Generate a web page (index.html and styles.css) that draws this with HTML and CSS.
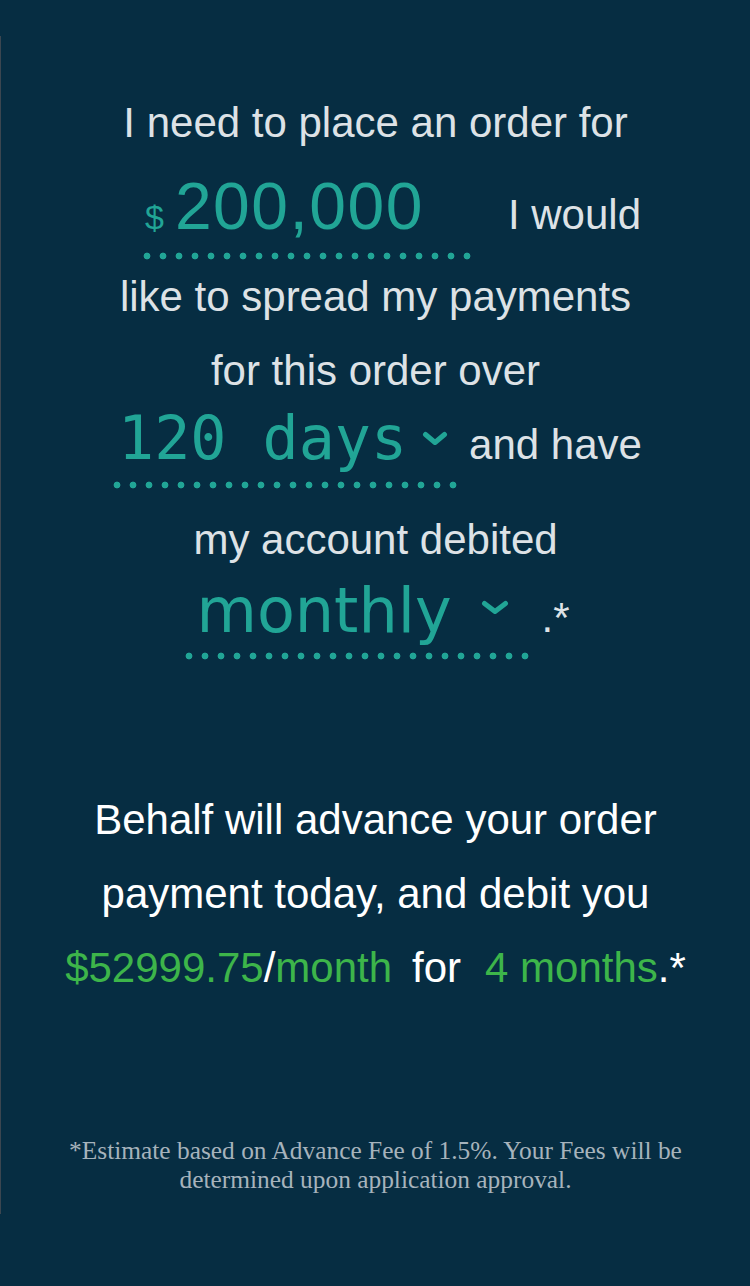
FILE: index.html
```html
<!DOCTYPE html>
<html lang="en">
<head>
<meta charset="utf-8">
<title>Advance calculator</title>
<link rel="stylesheet" href="styles.css">
</head>
<body>
<main class="panel">
  <section class="calc">
    <p class="line">I need to place an order for</p>
    <div class="row row-amount">
      <span class="field field-amount"><span class="cur">$</span><span class="amt">200,000</span></span>
      <span class="line-text">I would</span>
    </div>
    <p class="line">like to spread my payments</p>
    <p class="line">for this order over</p>
    <div class="row row-days">
      <span class="field field-days">120 days<svg class="chev chev-days" width="26" height="15" viewBox="0 0 26 15"><path d="M3.5 3.5 L13 11.5 L22.5 3.5" fill="none" stroke="#21a596" stroke-width="5" stroke-linecap="round" stroke-linejoin="round"/></svg></span>
      <span class="line-text">and have</span>
    </div>
    <p class="line">my account debited</p>
    <div class="row row-freq">
      <span class="field field-freq">monthly<svg class="chev chev-freq" width="28" height="15" viewBox="0 0 28 15"><path d="M3.5 3.5 L14 11.5 L24.5 3.5" fill="none" stroke="#21a596" stroke-width="5" stroke-linecap="round" stroke-linejoin="round"/></svg></span>
      <span class="line-text">.*</span>
    </div>
  </section>
  <section class="result">
    <p class="res-line">Behalf will advance your order<br>payment today, and debit you<br><span class="g">$52999.75</span>/<span class="g">month</span><span class="sep">for</span><span class="g">4 months</span>.*</p>
  </section>
  <p class="foot">*Estimate based on Advance Fee of 1.5%. Your Fees will be determined upon application approval.</p>
</main>
</body>
</html>
```
FILE: styles.css
```css
html, body {
  margin: 0;
  padding: 0;
  background: #062d42;
}
body {
  font-family: "Liberation Sans", Arial, sans-serif;
}
.panel {
  box-sizing: border-box;
  width: 750px;
  margin-top: 36px;
  border-left: 1px solid #3b4650;
  padding: 50px 0 20px;
  min-height: 1177px;
}
.calc {
  color: #dde2e6;
  font-size: 42px;
  text-align: center;
}
.line {
  margin: 0;
  height: 74px;
  line-height: 74px;
}
.line-text {
  line-height: 74px;
  white-space: nowrap;
}
.row {
  display: flex;
  justify-content: center;
  align-items: baseline;
}
.field {
  display: block;
  box-sizing: border-box;
  text-align: left;
  color: #21a596;
  white-space: nowrap;
  background-image: radial-gradient(circle at center, #21a596 3.1px, transparent 3.7px);
  background-size: 16px 8px;
  background-repeat: repeat-x;
  background-position: left bottom;
}
.row-amount {
  padding: 10px 0 0 29px;
  gap: 33px;
}
.field-amount {
  width: 336px;
  font-size: 66px;
  line-height: 72px;
  padding: 0 0 17.5px 6px;
}
.cur {
  font-size: 34px;
  line-height: 34px;
  margin-right: 11px;
}
.amt {
  letter-spacing: 1.5px;
}
.row-days {
  gap: 8px;
  margin-bottom: 13.4px;
}
.field-days {
  width: 352px;
  font-family: "DejaVu Sans Mono", monospace;
  font-size: 60px;
  line-height: 60px;
  padding: 0 0 21.8px 9px;
}
.chev {
  display: inline-block;
}
.chev-days {
  margin-left: 15px;
  vertical-align: 13px;
}
.row-freq {
  gap: 8px;
  padding-top: 3px;
}
.field-freq {
  width: 352px;
  font-family: "DejaVu Sans", sans-serif;
  font-size: 62px;
  line-height: 62px;
  padding: 0 0 18.6px 15px;
}
.chev-freq {
  margin-left: 29px;
  vertical-align: 17px;
}
.result {
  margin-top: 122.4px;
  text-align: center;
  color: #ffffff;
  font-size: 42px;
}
.res-line {
  margin: 0;
  line-height: 74px;
}
.g {
  color: #3db54a;
}
.sep {
  margin: 0 24px 0 20px;
}
.foot {
  margin: 131.5px 0 0;
  padding: 0 40px;
  font-family: "Liberation Serif", "Times New Roman", serif;
  font-size: 25.4px;
  line-height: 29px;
  color: #a6b3bc;
  text-align: center;
}
```
